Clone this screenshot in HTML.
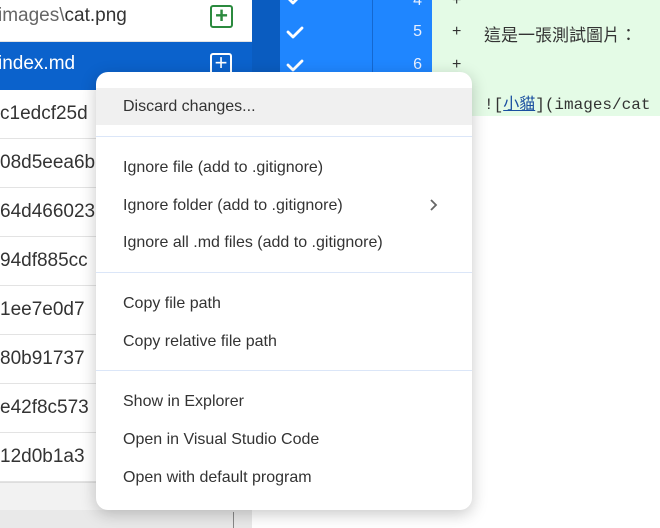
<!DOCTYPE html>
<html><head><meta charset="utf-8"><style>
*{margin:0;padding:0;box-sizing:border-box}
body{width:660px;height:528px;overflow:hidden;background:#fff;position:relative;font-family:"Segoe UI","Liberation Sans","Noto Sans CJK TC",sans-serif}
.row{position:absolute;left:0;width:252px;height:49px;border-bottom:1px solid #e3e3e3;font-size:19px;color:#333;line-height:48px;white-space:nowrap;overflow:hidden}
.a{position:absolute}
.menu{position:absolute;left:96px;top:72px;width:376px;height:438px;background:#fff;border-radius:12px;box-shadow:0 4px 16px rgba(0,0,0,.22)}
.it{position:absolute;left:27px;font-size:16px;color:#333;white-space:nowrap}
.sep{position:absolute;left:0;width:376px;height:1px;background:#dbe6f8}
.ln{position:absolute;left:380px;width:42px;text-align:right;color:#e8f0ff;font-size:16px}
</style></head><body>
<div class="a" style="left:0;top:0;width:252px;height:42px;background:#fff;border-bottom:1px solid #e3e3e3"></div>
<div class="a" style="left:-2px;top:5px;font-size:19px;color:#666">images\<span style="color:#333">cat.png</span></div>
<div class="a" style="left:210px;top:5px;width:23px;height:23px;border:2px solid #2b8a3e;border-radius:3px;color:#2b8a3e;font-size:22px;line-height:17px;text-align:center;font-weight:bold">+</div>
<div class="a" style="left:0;top:42px;width:252px;height:48px;background:#0b62cc"></div>
<div class="a" style="left:-2px;top:53px;font-size:19px;color:#fff">index.md</div>
<div class="a" style="left:210px;top:53px;width:22px;height:22px;border:2px solid #fff;border-radius:3px;color:#fff;font-size:22px;line-height:16px;text-align:center">+</div>
<div class="row" style="top:90px">c1edcf25d</div>
<div class="row" style="top:139px">08d5eea6b</div>
<div class="row" style="top:188px">64d466023</div>
<div class="row" style="top:237px">94df885cc</div>
<div class="row" style="top:286px">1ee7e0d7</div>
<div class="row" style="top:335px">80b91737</div>
<div class="row" style="top:384px">e42f8c573</div>
<div class="row" style="top:433px">12d0b1a3</div>
<div class="a" style="left:0;top:482px;width:252px;height:28px;background:#f2f2f2;border-top:1px solid #ddd"></div>
<div class="a" style="left:0;top:510px;width:252px;height:18px;background:#e9e9e9"></div>
<div class="a" style="left:233px;top:512px;width:1px;height:16px;background:#888"></div>
<div class="a" style="left:252px;top:0;width:28px;height:116px;background:#0a5cc0"></div>
<div class="a" style="left:280px;top:0;width:152px;height:116px;background:#1f86ff"></div>
<div class="a" style="left:372px;top:0;width:1px;height:116px;background:#1568d0"></div>
<svg class="a" style="left:284px;top:0" width="30" height="116"><g fill="none" stroke="#fff" stroke-width="2.8" stroke-linecap="round" stroke-linejoin="round"><polyline points="4,-2 9,3 18,-6"/><polyline points="4,32 9,37 18,28"/><polyline points="4,65 9,70 18,61"/></g></svg>
<div class="ln" style="top:-8px">4</div><div class="ln" style="top:23px">5</div><div class="ln" style="top:56px">6</div>
<div class="a" style="left:432px;top:0;width:228px;height:116px;background:#e4fbe6"></div>
<div class="a" style="left:452px;top:-8px;font-size:16px;color:#333">+</div>
<div class="a" style="left:452px;top:23px;font-size:16px;color:#333">+</div>
<div class="a" style="left:452px;top:56px;font-size:16px;color:#333">+</div>
<div class="a" style="left:484px;top:21px;font-size:17px;color:#333;font-family:'Noto Sans CJK TC',sans-serif">這是一張測試圖片：</div>
<div class="a" style="left:484px;top:90px;font-size:16px;color:#333;font-family:'Liberation Mono',monospace;white-space:nowrap">![<span style="color:#1a4fa0;text-decoration:underline;font-family:'Noto Sans CJK TC',sans-serif">小貓</span>](images/cat</div>
<div class="menu">
<div class="a" style="left:0;top:16px;width:376px;height:37px;background:#f0f0f0"></div>
<div class="it" style="top:26px">Discard changes...</div>
<div class="sep" style="top:64px"></div>
<div class="it" style="top:87px">Ignore file (add to .gitignore)</div>
<div class="it" style="top:125px">Ignore folder (add to .gitignore)</div>
<svg class="a" style="left:333px;top:127px" width="10" height="12"><polyline points="2,1 7,6 2,11" fill="none" stroke="#666" stroke-width="1.8"/></svg>
<div class="it" style="top:162px">Ignore all .md files (add to .gitignore)</div>
<div class="sep" style="top:200px"></div>
<div class="it" style="top:223px">Copy file path</div>
<div class="it" style="top:261px">Copy relative file path</div>
<div class="sep" style="top:298px"></div>
<div class="it" style="top:321px">Show in Explorer</div>
<div class="it" style="top:359px">Open in Visual Studio Code</div>
<div class="it" style="top:397px">Open with default program</div>
</div>
</body></html>
